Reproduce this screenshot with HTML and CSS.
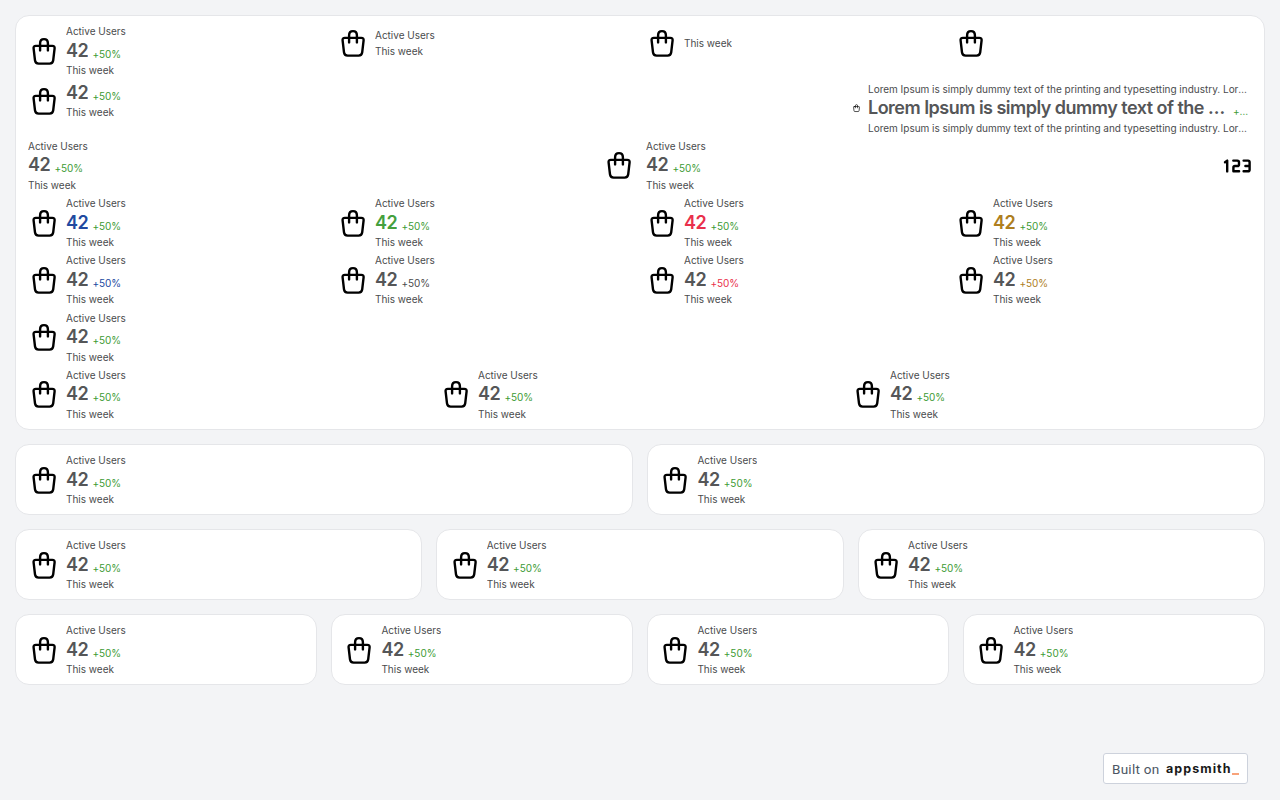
FILE: index.html
```html
<!DOCTYPE html>
<html lang="en">
<head>
<meta charset="utf-8">
<title>Stats</title>
<link rel="stylesheet" href="styles.css">
</head>
<body>
<svg class="defs" aria-hidden="true">
  <symbol id="bag" viewBox="0 0 32 40">
    <path d="M7.9 14.9H24.3Q26.9 14.9 26.6 17.4L25.2 29.4Q24.8 32.6 21.6 32.6H10.6Q7.4 32.6 7 29.4L5.6 17.4Q5.3 14.9 7.9 14.9ZM12.1 19.4V12.2Q12.1 8.1 16 8.1T19.9 12.2V19.4" fill="none" stroke="#000" stroke-width="2.4" stroke-linecap="round" stroke-linejoin="round"/>
  </symbol>
</svg>
<main class="page">
  <section class="card board">
    <div class="row cols4">
      <div class="stat"><svg class="icon"><use href="#bag"/></svg><div class="text"><div class="label">Active Users</div><div class="line"><span class="value">42</span><span class="delta">+50%</span></div><div class="label">This week</div></div></div>
      <div class="stat"><svg class="icon"><use href="#bag"/></svg><div class="text"><div class="label">Active Users</div><div class="label">This week</div></div></div>
      <div class="stat"><svg class="icon"><use href="#bag"/></svg><div class="text"><div class="label">This week</div></div></div>
      <div class="stat"><svg class="icon"><use href="#bag"/></svg></div>
    </div>
    <div class="row ends">
      <div class="stat"><svg class="icon"><use href="#bag"/></svg><div class="text"><div class="line"><span class="value">42</span><span class="delta">+50%</span></div><div class="label">This week</div></div></div>
      <div class="stat long"><svg class="icon tiny"><use href="#bag"/></svg><div class="text"><div class="label">Lorem Ipsum is simply dummy text of the printing and typesetting industry. Lorem Ipsum</div><div class="line"><span class="value">Lorem Ipsum is simply dummy text of the printing</span><span class="delta">+50%</span></div><div class="label">Lorem Ipsum is simply dummy text of the printing and typesetting industry. Lorem Ipsum</div></div></div>
    </div>
    <div class="row mixed">
      <div class="stat"><div class="text"><div class="label">Active Users</div><div class="line"><span class="value">42</span><span class="delta">+50%</span></div><div class="label">This week</div></div></div>
      <div class="stat"><svg class="icon"><use href="#bag"/></svg><div class="text"><div class="label">Active Users</div><div class="line"><span class="value">42</span><span class="delta">+50%</span></div><div class="label">This week</div></div></div>
      <svg class="digits" viewBox="0 0 29 16" aria-label="123"><path d="M2 4.2L4.2 2.6V13.4M10.3 2.6H14.3Q16 2.6 16 4.2V6.4Q16 8 14.3 8H12Q10.4 8 10.4 9.6V13.3H16.1M20.6 2.6H25Q26.6 2.6 26.6 4.2V11.7Q26.6 13.3 25 13.3H20.6M22.4 8H26.4" fill="none" stroke="#000" stroke-width="2.4" stroke-linecap="round" stroke-linejoin="round"/></svg>
    </div>
    <div class="row cols4">
      <div class="stat"><svg class="icon"><use href="#bag"/></svg><div class="text"><div class="label">Active Users</div><div class="line"><span class="value blue">42</span><span class="delta">+50%</span></div><div class="label">This week</div></div></div>
      <div class="stat"><svg class="icon"><use href="#bag"/></svg><div class="text"><div class="label">Active Users</div><div class="line"><span class="value green">42</span><span class="delta">+50%</span></div><div class="label">This week</div></div></div>
      <div class="stat"><svg class="icon"><use href="#bag"/></svg><div class="text"><div class="label">Active Users</div><div class="line"><span class="value red">42</span><span class="delta">+50%</span></div><div class="label">This week</div></div></div>
      <div class="stat"><svg class="icon"><use href="#bag"/></svg><div class="text"><div class="label">Active Users</div><div class="line"><span class="value gold">42</span><span class="delta">+50%</span></div><div class="label">This week</div></div></div>
    </div>
    <div class="row cols4">
      <div class="stat"><svg class="icon"><use href="#bag"/></svg><div class="text"><div class="label">Active Users</div><div class="line"><span class="value">42</span><span class="delta blue">+50%</span></div><div class="label">This week</div></div></div>
      <div class="stat"><svg class="icon"><use href="#bag"/></svg><div class="text"><div class="label">Active Users</div><div class="line"><span class="value">42</span><span class="delta neutral">+50%</span></div><div class="label">This week</div></div></div>
      <div class="stat"><svg class="icon"><use href="#bag"/></svg><div class="text"><div class="label">Active Users</div><div class="line"><span class="value">42</span><span class="delta red">+50%</span></div><div class="label">This week</div></div></div>
      <div class="stat"><svg class="icon"><use href="#bag"/></svg><div class="text"><div class="label">Active Users</div><div class="line"><span class="value">42</span><span class="delta gold">+50%</span></div><div class="label">This week</div></div></div>
    </div>
    <div class="row">
      <div class="stat"><svg class="icon"><use href="#bag"/></svg><div class="text"><div class="label">Active Users</div><div class="line"><span class="value">42</span><span class="delta">+50%</span></div><div class="label">This week</div></div></div>
    </div>
    <div class="row cols3">
      <div class="stat"><svg class="icon"><use href="#bag"/></svg><div class="text"><div class="label">Active Users</div><div class="line"><span class="value">42</span><span class="delta">+50%</span></div><div class="label">This week</div></div></div>
      <div class="stat"><svg class="icon"><use href="#bag"/></svg><div class="text"><div class="label">Active Users</div><div class="line"><span class="value">42</span><span class="delta">+50%</span></div><div class="label">This week</div></div></div>
      <div class="stat"><svg class="icon"><use href="#bag"/></svg><div class="text"><div class="label">Active Users</div><div class="line"><span class="value">42</span><span class="delta">+50%</span></div><div class="label">This week</div></div></div>
    </div>
  </section>
  <div class="cards cols2">
    <section class="card"><div class="stat"><svg class="icon"><use href="#bag"/></svg><div class="text"><div class="label">Active Users</div><div class="line"><span class="value">42</span><span class="delta">+50%</span></div><div class="label">This week</div></div></div></section>
    <section class="card"><div class="stat"><svg class="icon"><use href="#bag"/></svg><div class="text"><div class="label">Active Users</div><div class="line"><span class="value">42</span><span class="delta">+50%</span></div><div class="label">This week</div></div></div></section>
  </div>
  <div class="cards cols3">
    <section class="card"><div class="stat"><svg class="icon"><use href="#bag"/></svg><div class="text"><div class="label">Active Users</div><div class="line"><span class="value">42</span><span class="delta">+50%</span></div><div class="label">This week</div></div></div></section>
    <section class="card"><div class="stat"><svg class="icon"><use href="#bag"/></svg><div class="text"><div class="label">Active Users</div><div class="line"><span class="value">42</span><span class="delta">+50%</span></div><div class="label">This week</div></div></div></section>
    <section class="card"><div class="stat"><svg class="icon"><use href="#bag"/></svg><div class="text"><div class="label">Active Users</div><div class="line"><span class="value">42</span><span class="delta">+50%</span></div><div class="label">This week</div></div></div></section>
  </div>
  <div class="cards cols4">
    <section class="card"><div class="stat"><svg class="icon"><use href="#bag"/></svg><div class="text"><div class="label">Active Users</div><div class="line"><span class="value">42</span><span class="delta">+50%</span></div><div class="label">This week</div></div></div></section>
    <section class="card"><div class="stat"><svg class="icon"><use href="#bag"/></svg><div class="text"><div class="label">Active Users</div><div class="line"><span class="value">42</span><span class="delta">+50%</span></div><div class="label">This week</div></div></div></section>
    <section class="card"><div class="stat"><svg class="icon"><use href="#bag"/></svg><div class="text"><div class="label">Active Users</div><div class="line"><span class="value">42</span><span class="delta">+50%</span></div><div class="label">This week</div></div></div></section>
    <section class="card"><div class="stat"><svg class="icon"><use href="#bag"/></svg><div class="text"><div class="label">Active Users</div><div class="line"><span class="value">42</span><span class="delta">+50%</span></div><div class="label">This week</div></div></div></section>
  </div>
</main>
<a class="badge"><span class="built">Built on</span><span class="brand">appsmith</span><span class="cursor"></span></a>
</body>
</html>
```
FILE: styles.css
```css
* { box-sizing: border-box; }
body {
  margin: 0;
  height: 800px;
  overflow: hidden;
  background: #f3f4f6;
  font-family: Inter, "Liberation Sans", sans-serif;
  color: #4a4b4d;
}
.defs { position: absolute; width: 0; height: 0; }
.page {
  display: flex;
  flex-direction: column;
  gap: 14px;
  padding: 15px;
}
.card {
  background: #fff;
  border: 1px solid #e5e6e9;
  border-radius: 14px;
  padding: 7.4px 12px;
  min-width: 0;
}
.board { display: flex; flex-direction: column; gap: 4px; height: 415px; }
.row { display: grid; column-gap: 12px; height: 53.25px; align-items: start; }
.cards { display: grid; column-gap: 14px; }
.cards .card { height: 71px; padding-left: 11.4px; }
.cards .card:first-child { padding-left: 12px; }
.cols2 { grid-template-columns: repeat(2, 1fr); }
.cols3 { grid-template-columns: repeat(3, 1fr); }
.cols4 { grid-template-columns: repeat(4, 1fr); }
.ends { display: flex; justify-content: space-between; }
.mixed { grid-template-columns: 563px 1fr auto; }
.mixed .stat { gap: 11px; }
.stat { display: flex; align-items: center; gap: 6px; min-width: 0; }
.icon { width: 32px; height: 40px; flex: none; }
.tiny { width: 9px; height: 12px; }
.long { width: 400px; gap: 7px; }
.long .text { width: 380px; }
.text { min-width: 0; }
.label, .value, .delta {
  white-space: nowrap;
  overflow: hidden;
  text-overflow: ellipsis;
}
.label { font-size: 10px; line-height: 16px; letter-spacing: -0.01px; }
.line {
  display: flex;
  align-items: flex-start;
  gap: 4px;
  height: 23px;
  padding-top: 0.4px;
}
.value {
  font-size: 18px;
  line-height: 22px;
  font-weight: 600;
  letter-spacing: -0.42px;
  color: #555658;
  min-width: 0;
}
.delta {
  margin-top: 7px;
  font-size: 10px;
  line-height: 14px;
  letter-spacing: -0.03px;
  color: #3d9b35;
  flex: none;
}
.long .value { width: 361px; letter-spacing: -0.52px; }
.long .delta { width: 15px; }
.blue { color: #2149a0; }
.green { color: #45a03e; }
.red { color: #e9304c; }
.gold { color: #ae7e1e; }
.delta.neutral { color: #4a4b4d; }
.delta.blue { color: #2149a0; }
.delta.red { color: #e9304c; }
.delta.gold { color: #ae7e1e; }
.digits { width: 29px; height: 16px; margin-top: 20px; }
.badge {
  position: fixed;
  right: 32px;
  bottom: 16px;
  width: 145px;
  height: 31px;
  padding: 0 8px;
  display: flex;
  align-items: center;
  background: #fff;
  border: 1px solid #cdd2dc;
  border-radius: 3px;
}
.built { width: 54px; font: 13.5px Roboto, sans-serif; letter-spacing: 0.25px; color: #4c5664; }
.brand { width: 66px; font: 700 12.5px Inter, sans-serif; letter-spacing: 1.05px; color: #191919; }
.cursor { width: 7px; height: 2px; margin-top: 11px; background: #f8a37a; }
```
